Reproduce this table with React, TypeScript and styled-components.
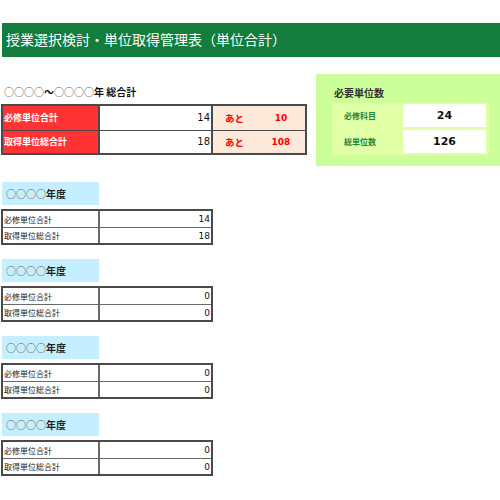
import React from "react";
import styled, { createGlobalStyle } from "styled-components";

const Global = createGlobalStyle`
  html, body { margin: 0; padding: 0; background: #fff; }
  body { font-family: "Noto Sans CJK JP", "DejaVu Sans", sans-serif; }
  * { box-sizing: border-box; }
`;

const Page = styled.div`
  width: 500px;
  height: 500px;
  overflow: hidden;
  padding-top: 23px;
`;

const TitleBar = styled.div`
  margin-left: 2px;
  height: 34px;
  background: #127d3d;
  color: #fff;
  font-size: 14px;
  display: flex;
  align-items: center;
  padding: 0 0 2px 4px;
  line-height: 1;
`;

const TopRow = styled.div`
  display: flex;
  align-items: flex-start;
  gap: 9px;
  margin-top: 17px;
  padding-left: 1px;
`;

const SummaryCol = styled.div`
  width: 306px;
  flex-shrink: 0;
`;

const SummaryLabel = styled.div`
  height: 30px;
  display: flex;
  align-items: flex-end;
  padding: 0 0 5px 3px;
  font-size: 10px;
  font-weight: 700;
  line-height: 14px;
  color: #111;
`;

const Circles = styled.span`
  font-weight: 400;
  color: #555;
`;

const SummaryTable = styled.div`
  border: 2px solid #4a4a4a;
  height: 51px;
  display: grid;
  grid-template-rows: 1fr 1fr;
`;

const SummaryRow = styled.div<{ $divider?: boolean }>`
  display: grid;
  grid-template-columns: 97px 113px 1fr;
  border-top: ${(p) => (p.$divider ? "1px solid #4a4a4a" : "none")};
`;

const RedLabel = styled.div`
  background: #ff3333;
  color: #fff;
  font-size: 9px;
  font-weight: 700;
  display: flex;
  align-items: center;
  padding-left: 1px;
  border-right: 2px solid #4a4a4a;
`;

const SumValue = styled.div`
  background: #fff;
  font-family: "DejaVu Sans", sans-serif;
  font-size: 10px;
  color: #111;
  display: flex;
  align-items: center;
  justify-content: flex-end;
  padding-right: 1px;
  border-right: 2px solid #4a4a4a;
`;

const Remain = styled.div`
  background: #fde9d9;
  display: flex;
  align-items: center;
  color: #ff0000;
  font-weight: 700;
`;

const AtoText = styled.span`
  width: 44px;
  padding-left: 12px;
  font-size: 9.5px;
`;

const RemainNum = styled.span`
  flex: 1;
  text-align: center;
  font-family: "DejaVu Sans", sans-serif;
  font-size: 9px;
`;

const NeedPanel = styled.div`
  flex: 1;
  height: 92px;
  background: #ccff99;
  padding: 12px 11px 11px 16px;
`;

const NeedTitle = styled.div`
  font-size: 10px;
  font-weight: 700;
  color: #333;
  line-height: 14px;
  padding-left: 2px;
  margin-bottom: 3px;
`;

const NeedTable = styled.div`
  background: #e0ffa6;
  display: grid;
  grid-template-columns: 68px 83px;
  grid-auto-rows: 23px;
  column-gap: 3px;
  row-gap: 3px;
  padding: 1px 3px 2px 0;
  width: 157px;
`;

const NeedLabel = styled.div`
  display: flex;
  align-items: center;
  padding-left: 12px;
  font-size: 8px;
  font-weight: 700;
  color: #1f8a3a;
`;

const NeedValue = styled.div`
  background: #fff;
  display: flex;
  align-items: center;
  justify-content: center;
  font-family: "DejaVu Sans", sans-serif;
  font-size: 11px;
  font-weight: 700;
  color: #111;
`;

const YearList = styled.div`
  margin-top: 16px;
  display: flex;
  flex-direction: column;
  gap: 14px;
`;

const YearSection = styled.div`
  display: flex;
  flex-direction: column;
  gap: 4px;
`;

const YearHeader = styled.div`
  margin-left: 2px;
  width: 97px;
  height: 23px;
  background: #c5efff;
  display: flex;
  align-items: center;
  padding-left: 4px;
  font-size: 10px;
  font-weight: 700;
  color: #222;
`;

const YearTable = styled.div`
  margin-left: 1px;
  width: 212px;
  height: 36px;
  border: 2px solid #4a4a4a;
  display: grid;
  grid-template-rows: 1fr 1fr;
`;

const YearRow = styled.div<{ $divider?: boolean }>`
  display: grid;
  grid-template-columns: 97px 1fr;
  border-top: ${(p) => (p.$divider ? "1px solid #6a6a6a" : "none")};
`;

const YearLabel = styled.div`
  font-size: 8px;
  color: #222;
  display: flex;
  align-items: center;
  padding-left: 1px;
  border-right: 2px solid #6a6a6a;
`;

const YearValue = styled.div`
  font-family: "DejaVu Sans", sans-serif;
  font-size: 9px;
  color: #111;
  display: flex;
  align-items: center;
  justify-content: flex-end;
  padding-right: 1px;
`;

const years = [
  { req: 14, total: 18 },
  { req: 0, total: 0 },
  { req: 0, total: 0 },
  { req: 0, total: 0 },
];

export default function App() {
  return (
    <>
      <Global />
      <Page>
        <TitleBar>授業選択検討・単位取得管理表（単位合計）</TitleBar>
        <TopRow>
          <SummaryCol>
            <SummaryLabel>
              <Circles>○○○○</Circles>～<Circles>○○○○</Circles>年 総合計
            </SummaryLabel>
            <SummaryTable>
              <SummaryRow>
                <RedLabel>必修単位合計</RedLabel>
                <SumValue>14</SumValue>
                <Remain>
                  <AtoText>あと</AtoText>
                  <RemainNum>10</RemainNum>
                </Remain>
              </SummaryRow>
              <SummaryRow $divider>
                <RedLabel>取得単位総合計</RedLabel>
                <SumValue>18</SumValue>
                <Remain>
                  <AtoText>あと</AtoText>
                  <RemainNum>108</RemainNum>
                </Remain>
              </SummaryRow>
            </SummaryTable>
          </SummaryCol>
          <NeedPanel>
            <NeedTitle>必要単位数</NeedTitle>
            <NeedTable>
              <NeedLabel>必修科目</NeedLabel>
              <NeedValue>24</NeedValue>
              <NeedLabel>総単位数</NeedLabel>
              <NeedValue>126</NeedValue>
            </NeedTable>
          </NeedPanel>
        </TopRow>
        <YearList>
          {years.map((y, i) => (
            <YearSection key={i}>
              <YearHeader>
                <Circles>○○○○</Circles>年度
              </YearHeader>
              <YearTable>
                <YearRow>
                  <YearLabel>必修単位合計</YearLabel>
                  <YearValue>{y.req}</YearValue>
                </YearRow>
                <YearRow $divider>
                  <YearLabel>取得単位総合計</YearLabel>
                  <YearValue>{y.total}</YearValue>
                </YearRow>
              </YearTable>
            </YearSection>
          ))}
        </YearList>
      </Page>
    </>
  );
}
